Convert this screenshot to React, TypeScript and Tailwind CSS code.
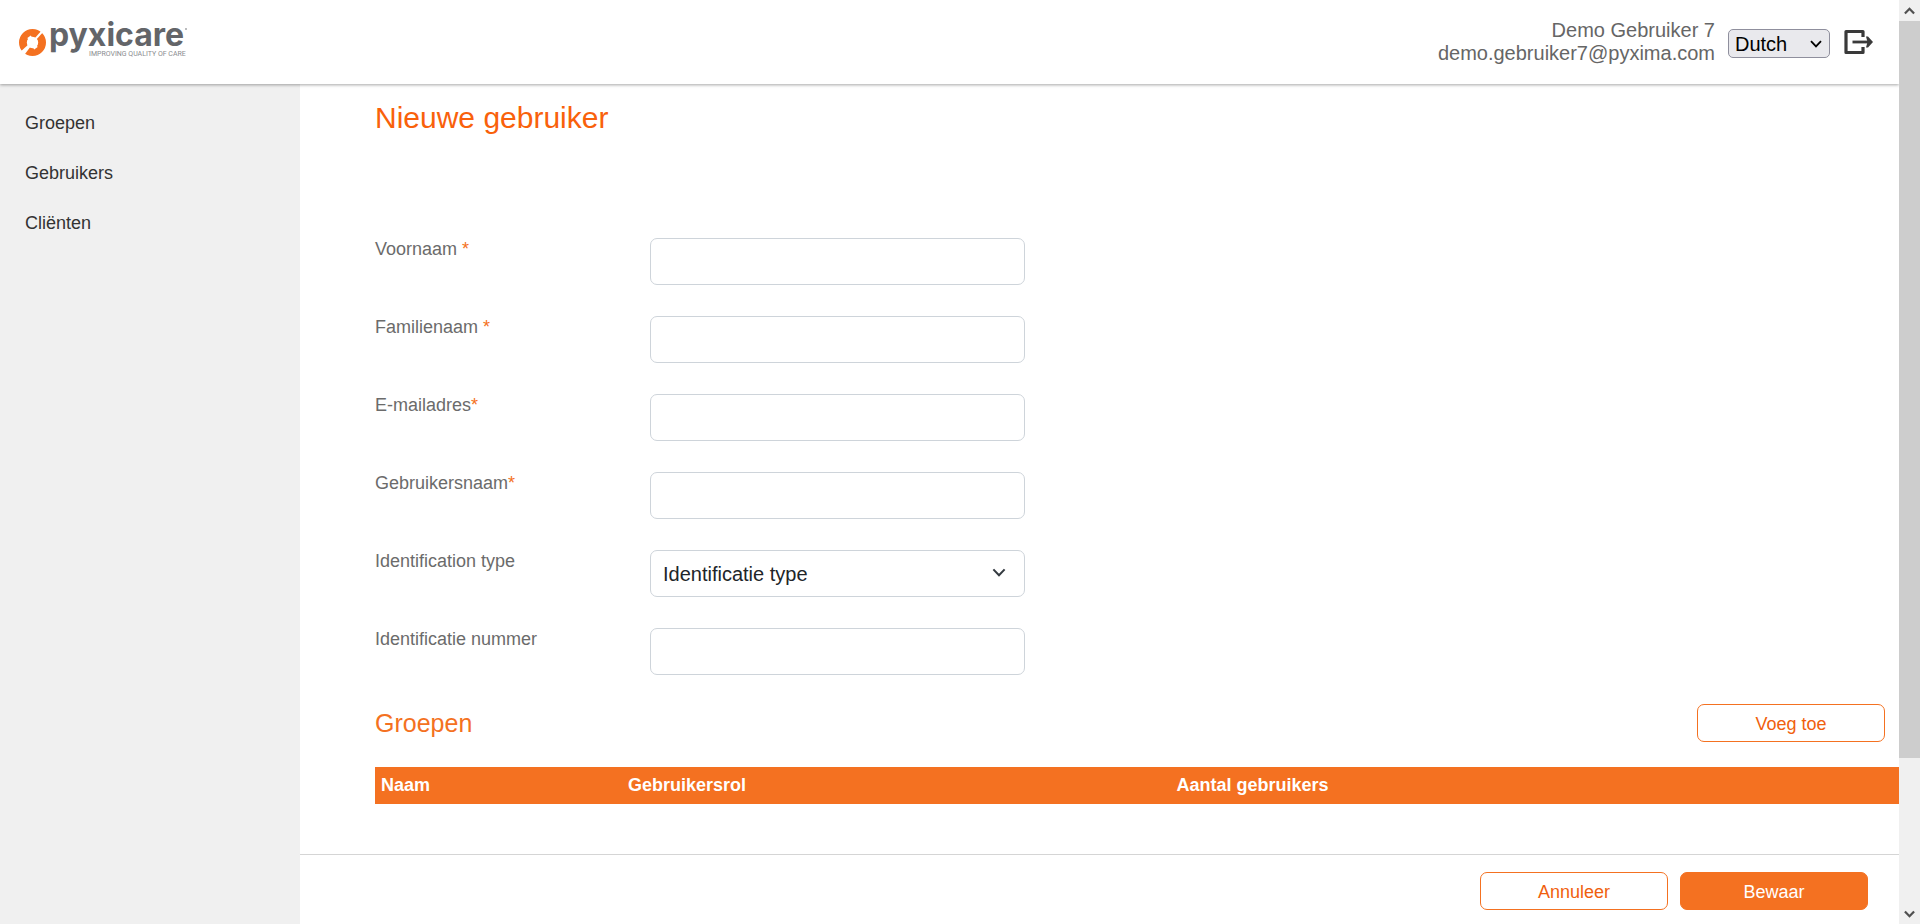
import type { ReactNode } from 'react';

const navItems = ['Groepen', 'Gebruikers', 'Cliënten'];

const fields = [
  { id: 'firstName', label: 'Voornaam ', required: true, type: 'text' },
  { id: 'lastName', label: 'Familienaam ', required: true, type: 'text' },
  { id: 'email', label: 'E-mailadres', required: true, type: 'email' },
  { id: 'username', label: 'Gebruikersnaam', required: true, type: 'text' },
  { id: 'idType', label: 'Identification type', required: false, type: 'select' },
  { id: 'idNumber', label: 'Identificatie nummer', required: false, type: 'text' },
];

function Logo() {
  return (
    <svg width="180" height="60" viewBox="0 0 180 60" role="img" aria-label="pyxicare">
      <circle cx="13.5" cy="34.5" r="9.6" fill="none" stroke="#f47121" strokeWidth="7.8" />
      <path d="M10.5 35.5 L-1 46 L3 50 L12 38 Z" fill="#fff" />
      <path d="M16 31.5 L25 21.5" stroke="#fff" strokeWidth="2" />
      <path d="M9 31 L12.5 28.5 M14.5 40.5 L18 38" stroke="#fff" strokeWidth="2.4" />
      <text x="30" y="38" fill="#636569" fontSize="32" fontWeight="700" fontFamily="Inter, sans-serif">pyxicare</text>
      <text x="70" y="48" fill="#8a8c8f" fontSize="7" fontFamily="Roboto, sans-serif">IMPROVING QUALITY OF CARE</text>
      <circle cx="167" cy="21" r="1" fill="#a5a6a8" />
    </svg>
  );
}

function Chevron({ className }: { className: string }) {
  return (
    <svg className={className} viewBox="0 0 12 8" fill="none" stroke="currentColor" strokeWidth="1.8" aria-hidden="true">
      <path d="M1 1.2 L6 6.4 L11 1.2" />
    </svg>
  );
}

function LogoutIcon() {
  return (
    <svg width="30" height="26" viewBox="0 0 30 26" fill="none" stroke="#3a3a3a" aria-hidden="true">
      <path d="M19 8 V2.5 H2 V23.5 H19 V18" strokeWidth="3.2" strokeLinejoin="round" />
      <path d="M8.5 13 H26" strokeWidth="2.8" />
      <path d="M22 7.5 L24 7.5 L29 13 L24 18.5 L22 18.5 L23.5 13 Z" fill="#3a3a3a" stroke="none" />
    </svg>
  );
}

function Header() {
  return (
    <header className="relative z-10 flex h-[84px] shrink-0 items-start justify-between bg-white pl-[19px] pr-[25px] shadow-[0_1px_3px_rgba(0,0,0,0.35)]">
      <a href="#" className="mt-2">
        <Logo />
      </a>
      <div className="mt-[19px] flex items-start">
        <div className="text-right text-[20px] leading-[23px] text-[#666]">
          <p>Demo Gebruiker 7</p>
          <p>demo.gebruiker7@pyxima.com</p>
        </div>
        <div className="relative ml-[13px] mt-[10px]">
          <select
            aria-label="Taal"
            className="block h-[29px] w-[102px] appearance-none rounded-[5px] border border-[#8f8f9d] bg-[#e9e9ed] pl-1.5 text-[20px] leading-[26px] text-black"
          >
            <option>Dutch</option>
            <option>English</option>
          </select>
          <Chevron className="pointer-events-none absolute right-2 top-[11px] h-2 w-3 text-black" />
        </div>
        <button type="button" aria-label="Afmelden" className="ml-[14px] mt-[10px]">
          <LogoutIcon />
        </button>
      </div>
    </header>
  );
}

function Sidebar() {
  return (
    <nav className="w-[300px] shrink-0 bg-[#f0f0f0] pt-[14px]">
      <ul>
        {navItems.map((item) => (
          <li key={item}>
            <a href="#" className="block px-[25px] text-[18px] leading-[50px] text-[#333]">{item}</a>
          </li>
        ))}
      </ul>
    </nav>
  );
}

function OutlineButton({ children }: { children: ReactNode }) {
  return (
    <button type="button" className="h-[38px] w-[188px] rounded-[7px] border border-[#f47121] bg-white pt-0.5 text-[18px] leading-6 text-[#f05f0e]">
      {children}
    </button>
  );
}

function Field({ field }: { field: (typeof fields)[number] }) {
  return (
    <div className="flex items-start">
      <label htmlFor={field.id} className="w-[275px] shrink-0 text-[18px] leading-[22px] text-[#6b6b6b]">
        {field.label}
        {field.required && <span className="text-[#f47121]">*</span>}
      </label>
      {field.type === 'select' ? (
        <div className="relative w-[375px]">
          <select id={field.id} className="block h-[47px] w-full appearance-none rounded-[7px] border border-[#ced4da] bg-white px-3 text-[20px] text-[#212529]">
            <option>Identificatie type</option>
          </select>
          <Chevron className="pointer-events-none absolute right-[19px] top-[18px] h-[9px] w-[14px] text-[#343a40]" />
        </div>
      ) : (
        <input id={field.id} type={field.type} className="h-[47px] w-[375px] rounded-[7px] border border-[#ced4da] bg-white px-3 text-[20px] text-[#212529]" />
      )}
    </div>
  );
}

function Scrollbar() {
  return (
    <div className="relative z-20 flex w-[21px] shrink-0 flex-col items-center bg-[#f0f0f0] text-[#505050]" aria-hidden="true">
      <div className="flex h-[21px] shrink-0 items-center">
        <Chevron className="h-2 w-[11px] rotate-180 stroke-[2.4]" />
      </div>
      <div className="flex w-full flex-1 flex-col">
        <div className="w-full flex-[737] bg-[#cdcdcd]" />
        <div className="flex-[145]" />
      </div>
      <div className="flex h-[21px] shrink-0 items-center">
        <Chevron className="h-2 w-[11px] stroke-[2.4]" />
      </div>
    </div>
  );
}

export default function App() {
  return (
    <div className="flex h-screen bg-white font-['Liberation_Sans',Arial,sans-serif]">
      <div className="flex min-w-0 flex-1 flex-col">
        <Header />
        <div className="flex min-h-0 flex-1">
          <Sidebar />
          <form className="flex min-w-0 flex-1 flex-col">
            <main className="min-h-0 flex-1 overflow-hidden pl-[75px]">
              <h1 className="pt-4 text-[30px] leading-[36px] text-[#f9610b]">Nieuwe gebruiker</h1>
              <div className="mt-[102px] flex flex-col gap-[31px]">
                {fields.map((field) => (
                  <Field key={field.id} field={field} />
                ))}
              </div>

              <div className="mt-[29px] flex items-center justify-between pr-[14px]">
                <h2 className="text-[25px] leading-[32px] text-[#f47121]">Groepen</h2>
                <OutlineButton>Voeg toe</OutlineButton>
              </div>

              <table className="mt-[25px] w-full table-fixed text-left text-[18px] text-white">
                <thead className="bg-[#f47121]">
                  <tr className="h-[37px] leading-6">
                    <th className="w-[16.2%] px-1.5 pb-0.5">Naam</th>
                    <th className="w-[36%] px-1.5 pb-0.5">Gebruikersrol</th>
                    <th className="px-1.5 pb-0.5">Aantal gebruikers</th>
                  </tr>
                </thead>
              </table>
            </main>

            {/* Actions */}
            <footer className="flex h-[70px] shrink-0 justify-end gap-3 border-t border-[#d5d5d5] pr-[31px] pt-[17px]">
              <OutlineButton>Annuleer</OutlineButton>
              <button type="submit" className="h-[38px] w-[188px] rounded-[7px] border border-[#f47121] bg-[#f47121] pt-0.5 text-[18px] leading-6 text-white">
                Bewaar
              </button>
            </footer>
          </form>
        </div>
      </div>
      <Scrollbar />
    </div>
  );
}
